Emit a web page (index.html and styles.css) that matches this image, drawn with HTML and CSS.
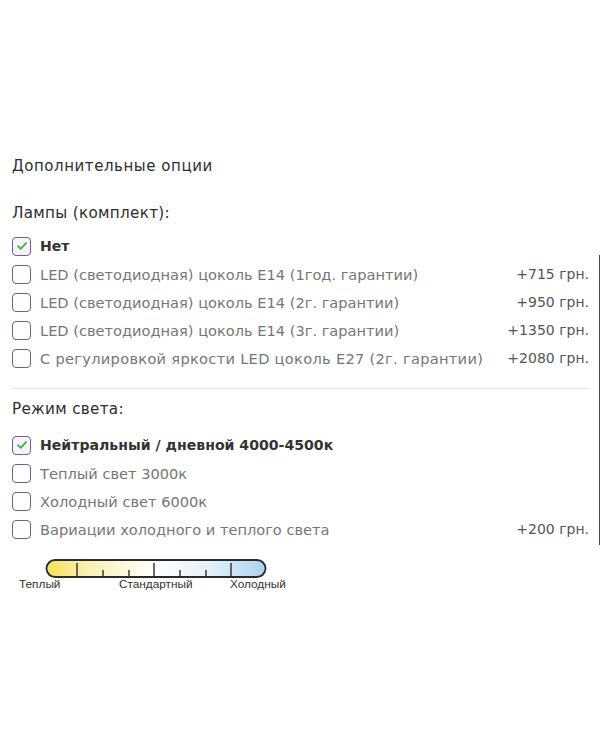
FILE: index.html
```html
<!DOCTYPE html>
<html lang="ru">
<head>
<meta charset="utf-8">
<title>Дополнительные опции</title>
<link rel="stylesheet" href="styles.css">
</head>
<body>
<div class="frame">
  <section class="options">
    <h3 class="options-title">Дополнительные опции</h3>

    <div class="group">
      <div class="group-label">Лампы (комплект):</div>
      <ul class="choices">
        <li class="choice is-checked"><span class="box"><svg viewBox="0 0 18 18"><path d="M4.5 9.2l3 3 6-6.5"/></svg></span><span class="name">Нет</span></li>
        <li class="choice"><span class="box"></span><span class="name">LED (светодиодная) цоколь E14 (1год. гарантии)</span><span class="price">+715 грн.</span></li>
        <li class="choice"><span class="box"></span><span class="name">LED (светодиодная) цоколь E14 (2г. гарантии)</span><span class="price">+950 грн.</span></li>
        <li class="choice"><span class="box"></span><span class="name">LED (светодиодная) цоколь E14 (3г. гарантии)</span><span class="price">+1350 грн.</span></li>
        <li class="choice"><span class="box"></span><span class="name wide">С регулировкой яркости LED цоколь E27 (2г. гарантии)</span><span class="price">+2080 грн.</span></li>
      </ul>
    </div>

    <hr class="divider">

    <div class="group">
      <div class="group-label tight">Режим света:</div>
      <ul class="choices">
        <li class="choice is-checked"><span class="box"><svg viewBox="0 0 18 18"><path d="M4.5 9.2l3 3 6-6.5"/></svg></span><span class="name">Нейтральный / дневной 4000-4500к</span></li>
        <li class="choice"><span class="box"></span><span class="name">Теплый свет 3000к</span></li>
        <li class="choice"><span class="box"></span><span class="name">Холодный свет 6000к</span></li>
        <li class="choice"><span class="box"></span><span class="name">Вариации холодного и теплого света</span><span class="price">+200 грн.</span></li>
      </ul>
    </div>

    <div class="scale">
      <svg class="scale-bar" width="222" height="20" viewBox="0 0 222 20">
        <defs>
          <linearGradient id="temp" x1="0" x2="1" y1="0" y2="0">
            <stop offset="0" stop-color="#f6e25a"/>
            <stop offset="0.2" stop-color="#f9f0b8"/>
            <stop offset="0.5" stop-color="#ffffff"/>
            <stop offset="0.75" stop-color="#e3f0fa"/>
            <stop offset="1" stop-color="#a9d3f1"/>
          </linearGradient>
        </defs>
        <rect x="1.5" y="1" width="219" height="17" rx="8.5" fill="url(#temp)" stroke="#2b2b2b" stroke-width="1.8"/>
        <g stroke="#2b2b2b" stroke-width="1.4">
          <line x1="32" y1="4" x2="32" y2="18"/>
          <line x1="58" y1="11" x2="58" y2="18"/>
          <line x1="84" y1="11" x2="84" y2="18"/>
          <line x1="109" y1="4" x2="109" y2="18"/>
          <line x1="135" y1="11" x2="135" y2="18"/>
          <line x1="161" y1="11" x2="161" y2="18"/>
          <line x1="186" y1="4" x2="186" y2="18"/>
        </g>
      </svg>
      <div class="scale-labels">
        <span class="warm">Теплый</span>
        <span class="mid">Стандартный</span>
        <span class="cold">Холодный</span>
      </div>
    </div>
  </section>
  <div class="edge"></div>
</div>
</body>
</html>
```

FILE: styles.css
```css
html, body {
  margin: 0;
  padding: 0;
  background: #ffffff;
}

.frame {
  width: 600px;
  height: 750px;
  position: relative;
}

/* thin dark rule along the right edge of the panel */
.edge {
  position: absolute;
  right: 0;
  top: 255px;
  width: 1px;
  height: 290px;
  background: #4a4a4a;
}

.options {
  padding: 155px 11px 0 12px;
  font-family: "DejaVu Sans", "Open Sans", sans-serif;
  font-size: 14.6px;
  color: #333333;
}

.options-title {
  margin: 0;
  font-size: 15px;
  font-weight: normal;
  letter-spacing: 0.55px;
  line-height: 22px;
  color: #2e2e2e;
}

.group-label {
  margin-top: 25px;
  font-size: 15.2px;
  letter-spacing: 0.3px;
  line-height: 22px;
  color: #2e2e2e;
}

.group-label.tight {
  margin-top: 9px;
}

.choices {
  list-style: none;
  margin: 8px 0 0 0;
  padding: 0;
}

.group:nth-of-type(2) .choices {
  margin-top: 11px;
}

.choice {
  display: flex;
  align-items: center;
  height: 28px;
  color: #767676;
}

.box {
  flex: none;
  width: 19px;
  height: 19px;
  box-sizing: border-box;
  border: 1.5px solid #7b5a8e;
  border-radius: 4px;
  margin-right: 9px;
  display: flex;
  align-items: center;
  justify-content: center;
}

.is-checked .box {
  background: #f7f3f9;
}

.box svg {
  width: 16px;
  height: 16px;
  fill: none;
  stroke: #3fae49;
  stroke-width: 2;
  stroke-linecap: round;
  stroke-linejoin: round;
}

.is-checked .name {
  font-weight: bold;
  font-size: 14.1px;
  color: #333333;
}

.name {
  flex: 1;
  white-space: nowrap;
}

.name.wide {
  letter-spacing: 0.3px;
}

.price {
  white-space: nowrap;
  font-size: 14px;
  color: #555555;
}

.divider {
  border: 0;
  border-top: 1px solid #e6e6e6;
  margin: 16px 0 0 0;
}

.scale {
  margin-top: 16px;
  margin-left: 33px;
  width: 280px;
  position: relative;
}

.scale-bar {
  display: block;
}

.scale-labels {
  position: relative;
  height: 14px;
  font-family: "Liberation Sans", Arial, sans-serif;
  font-size: 11.8px;
  color: #333333;
  line-height: 12px;
  margin-top: -1px;
}

.scale-labels span {
  position: absolute;
  top: 0;
}

.scale-labels .warm { left: -26px; }
.scale-labels .mid { left: 74px; }
.scale-labels .cold { left: 185px; }
```
